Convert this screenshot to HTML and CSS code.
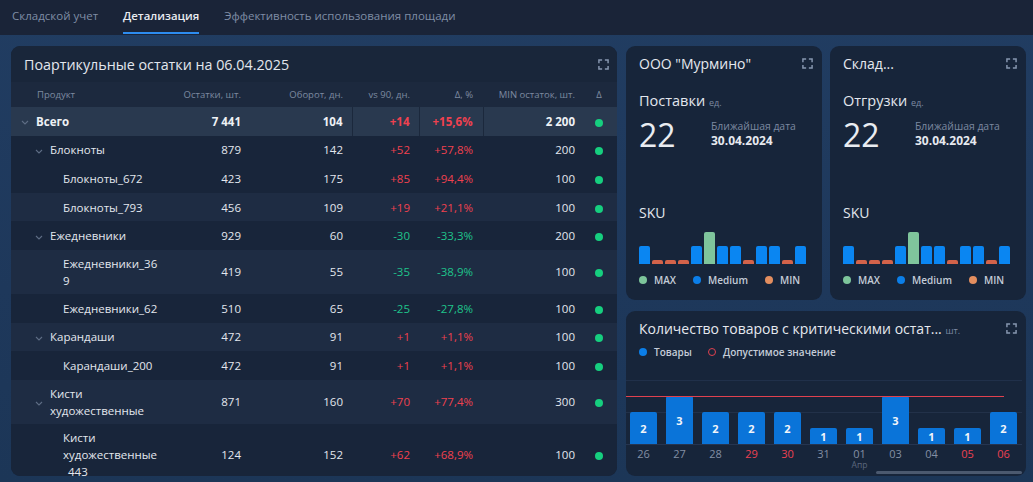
FILE: index.html
```html
<!DOCTYPE html>
<html lang="ru">
<head>
<meta charset="utf-8">
<title>Детализация</title>
<link rel="stylesheet" href="styles.css">
</head>
<body>
<header class="tabs">
  <a class="tab">Складской учет</a>
  <a class="tab active">Детализация</a>
  <a class="tab">Эффективность использования площади</a>
</header>
<main class="layout">
  <section class="card table-card">
    <div class="card-head">
      <h2 class="card-title">Поартикульные остатки на 06.04.2025</h2>
      <svg class="expand" viewBox="0 0 12 12"><path d="M1 4.5V1h3.5M7.5 1H11v3.5M11 7.5V11H7.5M4.5 11H1V7.5"/></svg>
    </div>
    <div class="table-wrap">
      <table class="grid">
        <colgroup>
          <col class="w-prod"><col class="w-rest"><col class="w-turn"><col class="w-vs"><col class="w-pct"><col class="w-min"><col class="w-dot">
        </colgroup>
        <thead>
          <tr>
            <th class="prod-h">Продукт</th>
            <th>Остатки, шт.</th>
            <th>Оборот, дн.</th>
            <th>vs 90, дн.</th>
            <th class="pr10">Δ, %</th>
            <th class="pr10">MIN остаток, шт.</th>
            <th class="dot-h">Δ</th>
          </tr>
        </thead>
        <tbody>
          <tr class="total">
            <td class="prod lvl0"><span class="prod-in"><svg class="chev" viewBox="0 0 8 5"><polyline points="1,1 4,4 7,1"/></svg>Всего</span></td>
            <td>7 441</td><td>104</td><td class="up sep">+14</td><td class="up sep pr10">+15,6%</td><td class="sep pr10">2 200</td><td class="dotc"><i class="dot"></i></td>
          </tr>
          <tr class="dark">
            <td class="prod lvl1"><span class="prod-in"><svg class="chev" viewBox="0 0 8 5"><polyline points="1,1 4,4 7,1"/></svg>Блокноты</span></td>
            <td>879</td><td>142</td><td class="up">+52</td><td class="up pr10">+57,8%</td><td class="pr10">200</td><td class="dotc"><i class="dot"></i></td>
          </tr>
          <tr class="dark">
            <td class="prod lvl2">Блокноты_672</td>
            <td>423</td><td>175</td><td class="up">+85</td><td class="up pr10">+94,4%</td><td class="pr10">100</td><td class="dotc"><i class="dot"></i></td>
          </tr>
          <tr class="light">
            <td class="prod lvl2">Блокноты_793</td>
            <td>456</td><td>109</td><td class="up">+19</td><td class="up pr10">+21,1%</td><td class="pr10">100</td><td class="dotc"><i class="dot"></i></td>
          </tr>
          <tr class="dark">
            <td class="prod lvl1"><span class="prod-in"><svg class="chev" viewBox="0 0 8 5"><polyline points="1,1 4,4 7,1"/></svg>Ежедневники</span></td>
            <td>929</td><td>60</td><td class="down">-30</td><td class="down pr10">-33,3%</td><td class="pr10">200</td><td class="dotc"><i class="dot"></i></td>
          </tr>
          <tr class="light">
            <td class="prod lvl2">Ежедневники_369</td>
            <td>419</td><td>55</td><td class="down">-35</td><td class="down pr10">-38,9%</td><td class="pr10">100</td><td class="dotc"><i class="dot"></i></td>
          </tr>
          <tr class="dark">
            <td class="prod lvl2">Ежедневники_62</td>
            <td>510</td><td>65</td><td class="down">-25</td><td class="down pr10">-27,8%</td><td class="pr10">100</td><td class="dotc"><i class="dot"></i></td>
          </tr>
          <tr class="light">
            <td class="prod lvl1"><span class="prod-in"><svg class="chev" viewBox="0 0 8 5"><polyline points="1,1 4,4 7,1"/></svg>Карандаши</span></td>
            <td>472</td><td>91</td><td class="up">+1</td><td class="up pr10">+1,1%</td><td class="pr10">100</td><td class="dotc"><i class="dot"></i></td>
          </tr>
          <tr class="dark">
            <td class="prod lvl2">Карандаши_200</td>
            <td>472</td><td>91</td><td class="up">+1</td><td class="up pr10">+1,1%</td><td class="pr10">100</td><td class="dotc"><i class="dot"></i></td>
          </tr>
          <tr class="light">
            <td class="prod lvl1"><span class="prod-in"><svg class="chev" viewBox="0 0 8 5"><polyline points="1,1 4,4 7,1"/></svg><span>Кисти художественные</span></span></td>
            <td>871</td><td>160</td><td class="up">+70</td><td class="up pr10">+77,4%</td><td class="pr10">300</td><td class="dotc"><i class="dot"></i></td>
          </tr>
          <tr class="dark">
            <td class="prod lvl2">Кисти художественные_443</td>
            <td>124</td><td>152</td><td class="up">+62</td><td class="up pr10">+68,9%</td><td class="pr10">100</td><td class="dotc"><i class="dot"></i></td>
          </tr>
        </tbody>
      </table>
    </div>
  </section>

  <div class="side">
    <div class="side-top">
      <section class="card kpi">
        <div class="kpi-head">
          <h3 class="kpi-title">ООО "Мурмино"</h3>
          <svg class="expand" viewBox="0 0 12 12"><path d="M1 4.5V1h3.5M7.5 1H11v3.5M11 7.5V11H7.5M4.5 11H1V7.5"/></svg>
        </div>
        <div class="metric-label">Поставки <span class="unit">ед.</span></div>
        <div class="metric-row">
          <div class="metric-value">22</div>
          <div class="metric-date">
            <div class="date-label">Ближайшая дата</div>
            <div class="date-value">30.04.2024</div>
          </div>
        </div>
        <div class="sku-title">SKU</div>
        <div class="sku-bars">
          <span class="sb med"></span><span class="sb min"></span><span class="sb min"></span><span class="sb min"></span><span class="sb med"></span><span class="sb max"></span><span class="sb med"></span><span class="sb med"></span><span class="sb min"></span><span class="sb med"></span><span class="sb med"></span><span class="sb min"></span><span class="sb med"></span>
        </div>
        <div class="legend">
          <span class="lg"><i class="ld ld-max"></i>MAX</span>
          <span class="lg"><i class="ld ld-med"></i>Medium</span>
          <span class="lg"><i class="ld ld-min"></i>MIN</span>
        </div>
      </section>

      <section class="card kpi">
        <div class="kpi-head">
          <h3 class="kpi-title">Склад...</h3>
          <svg class="expand" viewBox="0 0 12 12"><path d="M1 4.5V1h3.5M7.5 1H11v3.5M11 7.5V11H7.5M4.5 11H1V7.5"/></svg>
        </div>
        <div class="metric-label">Отгрузки <span class="unit">ед.</span></div>
        <div class="metric-row">
          <div class="metric-value">22</div>
          <div class="metric-date">
            <div class="date-label">Ближайшая дата</div>
            <div class="date-value">30.04.2024</div>
          </div>
        </div>
        <div class="sku-title">SKU</div>
        <div class="sku-bars">
          <span class="sb med"></span><span class="sb min"></span><span class="sb min"></span><span class="sb min"></span><span class="sb med"></span><span class="sb max"></span><span class="sb med"></span><span class="sb med"></span><span class="sb min"></span><span class="sb med"></span><span class="sb med"></span><span class="sb min"></span><span class="sb med"></span>
        </div>
        <div class="legend">
          <span class="lg"><i class="ld ld-max"></i>MAX</span>
          <span class="lg"><i class="ld ld-med"></i>Medium</span>
          <span class="lg"><i class="ld ld-min"></i>MIN</span>
        </div>
      </section>
    </div>

    <section class="card crit">
      <div class="kpi-head">
        <h3 class="kpi-title">Количество товаров с критическими остат... <span class="unit">шт.</span></h3>
        <svg class="expand" viewBox="0 0 12 12"><path d="M1 4.5V1h3.5M7.5 1H11v3.5M11 7.5V11H7.5M4.5 11H1V7.5"/></svg>
      </div>
      <div class="legend crit-legend">
        <span class="lg"><i class="ld ld-goods"></i>Товары</span>
        <span class="lg"><i class="ld ld-ring"></i>Допустимое значение</span>
      </div>
      <div class="plot">
        <span class="gridline"></span>
        <span class="limit"></span>
        <div class="cbar v2">2</div>
        <div class="cbar v3">3</div>
        <div class="cbar v2">2</div>
        <div class="cbar v2">2</div>
        <div class="cbar v2">2</div>
        <div class="cbar v1">1</div>
        <div class="cbar v1">1</div>
        <div class="cbar v3">3</div>
        <div class="cbar v1">1</div>
        <div class="cbar v1">1</div>
        <div class="cbar v2">2</div>
      </div>
      <div class="xaxis">
        <span class="xl">26</span>
        <span class="xl">27</span>
        <span class="xl">28</span>
        <span class="xl hol">29</span>
        <span class="xl hol">30</span>
        <span class="xl">31</span>
        <span class="xl">01<small class="month">Апр</small></span>
        <span class="xl">03</span>
        <span class="xl">04</span>
        <span class="xl hol">05</span>
        <span class="xl hol">06</span>
      </div>
      <div class="hscroll"><span class="thumb"></span></div>
    </section>
  </div>
</main>
</body>
</html>
```

FILE: styles.css
```css
* {
  box-sizing: border-box;
  margin: 0;
  padding: 0;
}

html, body {
  width: 1033px;
  height: 482px;
  overflow: hidden;
}

body {
  font-family: "Open Sans", "Noto Sans", sans-serif;
  background: linear-gradient(180deg, #213d62 0%, #1e385b 60%, #1c3657 100%);
  color: #e2e6ed;
}

/* Tabs */
.tabs {
  height: 35px;
  background: #1a2438;
  display: flex;
  padding-left: 12px;
}

.tab {
  display: block;
  height: 34px;
  line-height: 31px;
  font-size: 11.5px;
  color: #7f8da5;
  border-bottom: 2px solid transparent;
  white-space: nowrap;
}

.tab + .tab {
  margin-left: 25px;
}

.tab.active {
  color: #e9ecf1;
  font-weight: 600;
  font-size: 11.4px;
  border-bottom-color: #2d8cef;
}

/* Layout */
.layout {
  display: flex;
  gap: 9px;
  height: 447px;
  padding: 11px 7px 6px 11px;
}

.card {
  background: #17253a;
  border-radius: 9px;
  overflow: hidden;
}

.table-card {
  width: 606px;
  display: flex;
  flex-direction: column;
}

.card-head {
  height: 36px;
  flex: none;
  display: flex;
  align-items: center;
  justify-content: space-between;
  padding: 0 8px 0 13px;
  background: #19263a;
}

.card-title {
  font-size: 14.3px;
  font-weight: 400;
  color: #e3e7ee;
}

.expand {
  width: 11px;
  height: 11px;
  flex: none;
  fill: none;
  stroke: #8797b0;
  stroke-width: 1.6;
}

/* Table */
.table-wrap {
  flex: 1;
  overflow: hidden;
}

.grid {
  width: 606px;
  border-collapse: collapse;
  table-layout: fixed;
  font-size: 11.5px;
}

.w-prod { width: 159px; }
.w-rest { width: 80px; }
.w-turn { width: 102px; }
.w-vs { width: 67px; }
.w-pct { width: 64px; }
.w-min { width: 102px; }
.w-dot { width: 32px; }

.grid th {
  height: 25px;
  background: #1c293e;
  font-size: 9.5px;
  font-weight: 400;
  color: #7c89a0;
  text-align: right;
  padding: 0 9px 0 0;
  white-space: nowrap;
}

.grid th.prod-h {
  text-align: left;
  padding-left: 26px;
}

.grid th.dot-h {
  text-align: center;
  padding: 0 4px 0 0;
}

.grid td {
  height: 28.6px;
  padding: 5px 9px 5px 0;
  line-height: 17px;
  text-align: right;
  font-weight: 500;
  color: #e3e7ee;
  vertical-align: middle;
}

.grid th.pr10,
.grid td.pr10 {
  padding-right: 10px;
}

.grid td.prod {
  text-align: left;
  overflow-wrap: anywhere;
}

.prod-in {
  display: flex;
  align-items: center;
}

.grid td.lvl0 { padding-left: 10px; }
.grid td.lvl1 { padding-left: 24px; }
.grid td.lvl2 { padding-left: 52px; }

.chev {
  width: 8px;
  height: 5px;
  flex: none;
  margin: 3px 7px 0 0;
  fill: none;
  stroke: #5d6c84;
  stroke-width: 1.1;
}

.grid tr.total td {
  background: #29394f;
  font-weight: 700;
  color: #eef1f5;
}

.grid tr.total td.sep {
  border-left: 1px solid #1b283c;
}

.grid tr.dark td {
  background: #18253a;
}

.grid tr.light td {
  background: #1e2c43;
}

.grid td.up,
.grid tr.total td.up {
  color: #f0414f;
}

.grid td.down {
  color: #1fc48b;
}

.grid td.dotc {
  text-align: center;
  padding: 0 4px 0 0;
}

.dot {
  display: inline-block;
  width: 8px;
  height: 8px;
  border-radius: 50%;
  background: #16cf7f;
  vertical-align: middle;
}

/* Side */
.side {
  width: 400px;
  display: flex;
  flex-direction: column;
  gap: 11px;
}

.side-top {
  height: 254px;
  display: flex;
  gap: 8px;
}

.kpi {
  flex: 1;
  padding: 8px 9px 0 13px;
  display: flex;
  flex-direction: column;
}

.kpi-head {
  height: 18px;
  display: flex;
  align-items: center;
  justify-content: space-between;
}

.kpi-title {
  font-size: 14px;
  font-weight: 500;
  color: #e6e9ef;
  white-space: nowrap;
}

.unit {
  font-size: 9px;
  font-weight: 400;
  color: #7d8aa1;
}

.metric-label {
  margin-top: 19px;
  height: 20px;
  line-height: 20px;
  font-size: 14.5px;
  color: #e3e7ee;
  white-space: nowrap;
}

.metric-row {
  margin-top: 4px;
  height: 40px;
  display: flex;
}

.metric-value {
  width: 72px;
  font-size: 32px;
  line-height: 40px;
  font-weight: 400;
  color: #e9ecf1;
}

.metric-date {
  padding-top: 4px;
}

.date-label {
  font-size: 10.4px;
  line-height: 14px;
  color: #7c89a0;
  white-space: nowrap;
}

.date-value {
  font-size: 12px;
  line-height: 16px;
  font-weight: 700;
  color: #e6e9ef;
}

.sku-title {
  margin-top: 48px;
  height: 20px;
  line-height: 20px;
  font-size: 14px;
  color: #e3e7ee;
}

.sku-bars {
  margin-top: 9px;
  width: 167px;
  height: 32px;
  display: flex;
  align-items: flex-end;
  gap: 1.7px;
}

.sb {
  flex: 1;
  border-radius: 2px 2px 0 0;
}

.sb.med { height: 18px; background: #0a86f2; }
.sb.max { height: 32px; background: #7fc59c; }
.sb.min { height: 4px; background: #d3634a; }

.legend {
  margin-top: 9px;
  height: 14px;
  display: flex;
  align-items: center;
  gap: 17px;
  font-size: 10px;
  font-weight: 600;
  color: #c4ccd8;
}

.lg {
  display: flex;
  align-items: center;
  gap: 7px;
  white-space: nowrap;
}

.ld {
  display: block;
  width: 8px;
  height: 8px;
  border-radius: 50%;
}

.ld-max { background: #7dc59b; }
.ld-med { background: #0b7ee8; }
.ld-min { background: #e38e5f; }
.ld-goods { background: #0b7ee8; }
.ld-ring {
  border: 1.5px solid #e0414f;
  background: transparent;
}

/* Critical chart */
.crit {
  height: 165px;
  padding: 8px 9px 0 13px;
  display: flex;
  flex-direction: column;
}

.crit-legend {
  margin-top: 8px;
  gap: 16px;
}

.plot {
  position: relative;
  margin: 21px -5px 0 -13px;
  height: 65px;
  border-top: 1px solid #20304a;
  border-bottom: 1px solid #263550;
  display: flex;
  align-items: flex-end;
  gap: 9px;
  padding-left: 4px;
}

.gridline {
  position: absolute;
  left: 0;
  right: 0;
  top: 31px;
  height: 1px;
  background: #223149;
}

.limit {
  position: absolute;
  left: 0;
  width: 378px;
  top: 14.5px;
  height: 1.6px;
  background: #e0414f;
  z-index: 2;
}

.cbar {
  position: relative;
  z-index: 1;
  width: 27px;
  background: #0a74d9;
  border-radius: 2px 2px 0 0;
  display: flex;
  align-items: center;
  justify-content: center;
  font-size: 11px;
  font-weight: 700;
  color: #f2f5f9;
}

.cbar.v1 { height: 16px; }
.cbar.v2 { height: 32px; }
.cbar.v3 { height: 48px; }

.xaxis {
  margin: 3px 0 0 -9px;
  display: flex;
  gap: 9px;
}

.xl {
  width: 27px;
  display: flex;
  flex-direction: column;
  align-items: center;
  font-size: 11px;
  line-height: 12px;
  color: #838fa4;
  height: 12px;
}

.xl.hol {
  color: #ec4152;
}

.month {
  font-size: 8.5px;
  line-height: 9px;
  color: #5c687e;
}

.hscroll {
  margin: 11px -5px 0 237px;
  height: 3px;
}

.thumb {
  display: block;
  height: 3px;
  border-radius: 2px;
  background: #4b596f;
}
```
